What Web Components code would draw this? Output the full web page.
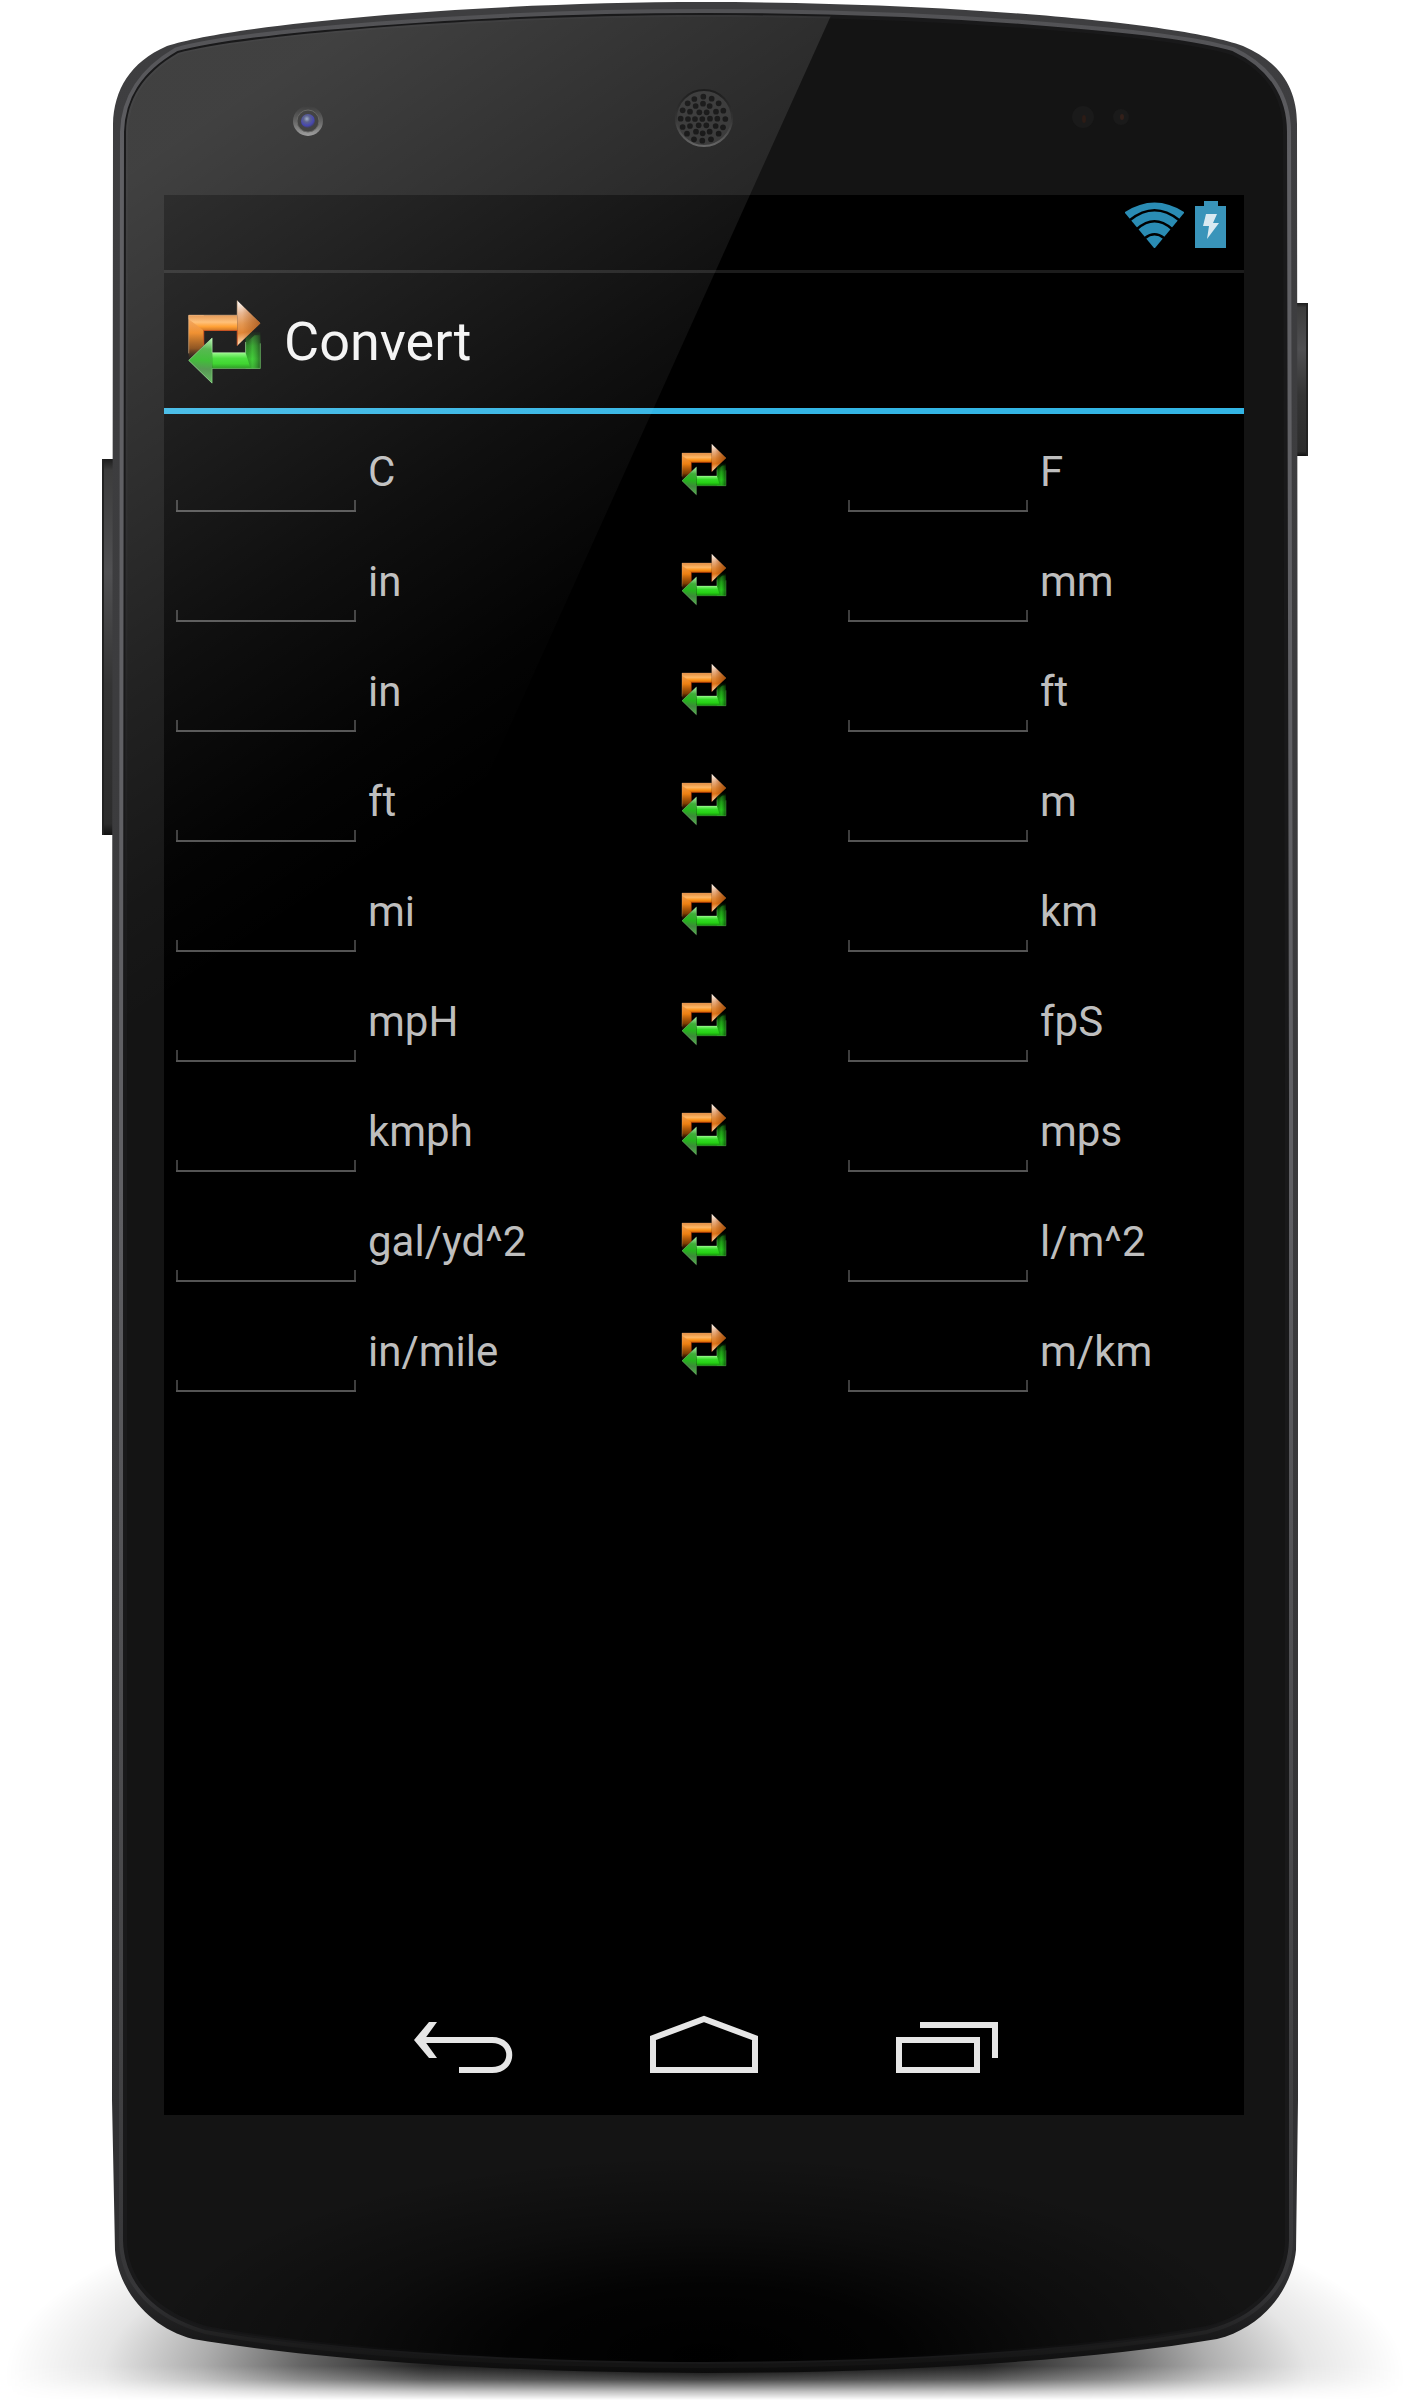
<!DOCTYPE html>
<html lang="en">
<head>
<meta charset="utf-8">
<meta name="viewport" content="width=device-width, initial-scale=1">
<title>Convert</title>
<style>
body { margin: 0; background: #fff; font-family: Roboto, "Noto Sans", sans-serif; }
</style>
</head>
<body>
<phone-frame>
  <status-bar></status-bar>
  <action-bar>Convert</action-bar>
  <convert-list></convert-list>
  <nav-bar></nav-bar>
</phone-frame>
<script>
const define = (name, markup, setup) => {
  const template = document.createElement('template');
  template.innerHTML = markup;
  customElements.define(name, class extends HTMLElement {
    constructor() {
      super();
      this.attachShadow({ mode: 'open' }).append(template.content.cloneNode(true));
    }
    connectedCallback() { if (setup) setup(this, this.shadowRoot); }
  });
};

const GLASS = 'M125 1100 L126 132 C127 100 142 74 178 53 C240 36 470 15 705 15 C940 15 1170 34 1232 53 C1268 70 1285 98 1285 132 L1287 1100 L1287 2240 C1286 2284 1254 2316 1206 2328 C1080 2351 880 2362 705 2362 C530 2362 330 2351 206 2328 C158 2314 126 2284 125 2240 Z';
const BODY = 'M112 1100 L113 124 C114 90 130 62 167 46 C230 25 470 2 705 2 C940 2 1180 22 1243 46 C1280 62 1297 88 1297 124 L1298 1100 L1298 2100 L1296 2250 C1292 2290 1262 2328 1217 2339 C1080 2362 880 2373 705 2373 C530 2373 330 2362 193 2339 C150 2328 118 2290 115 2250 L112 2100 Z';
const HOLES = [[187,177],[178,157],[200,157],[210,176],[199,196],[176,196],[165,177],[189,131],[209,138],[228,155],[232,176],[227,198],[209,215],[188,220],[168,215],[150,198],[144,177],[150,155],[167,138],[190,110],[215,116],[236,130],[250,152],[256,177],[249,202],[236,221],[213,238],[187,242],[162,238],[141,221],[128,201],[122,176],[128,151],[143,130],[163,117]]
  .map(([x, y]) => `<circle cx="${x}" cy="${y}" r="8.6"/>`).join('');

/* Hardware shell, with the app in the screen cell and the glass reflection above it */
define('phone-frame', `
<style>
:host { display: grid; grid-template: 195fr 1920fr 291fr / 164fr 1080fr 166fr; aspect-ratio: 1410 / 2406; overflow: hidden; }
svg { grid-area: 1 / 1 / 4 / 4; width: 100%; height: 100%; display: block; }
.gloss { pointer-events: none; }
.screen { grid-area: 2 / 2; display: flex; flex-direction: column; background: #000; min-width: 0; min-height: 0; }
::slotted(convert-list) { flex: 1; }
</style>
<svg viewBox="0 0 1410 2406" aria-hidden="true">
  <defs>
    <radialGradient id="sh" gradientUnits="userSpaceOnUse" cx="0" cy="0" r="1" gradientTransform="translate(705 2375) scale(700 215)">
      <stop offset="0" stop-opacity="1"/><stop offset=".4" stop-opacity=".86"/><stop offset=".58" stop-opacity=".6"/><stop offset=".72" stop-opacity=".32"/><stop offset=".86" stop-opacity=".1"/><stop offset="1" stop-opacity="0"/>
    </radialGradient>
    <linearGradient id="fade" gradientUnits="userSpaceOnUse" x1="0" y1="2366" x2="0" y2="2400">
      <stop offset="0" stop-color="#fff"/><stop offset=".4" stop-color="#bbb"/><stop offset=".75" stop-color="#444"/><stop offset="1" stop-color="#000"/>
    </linearGradient>
    <mask id="m" maskUnits="userSpaceOnUse" x="0" y="2100" width="1410" height="306"><rect y="2100" width="1410" height="306" fill="url(#fade)"/></mask>
    <linearGradient id="rim" x1="0" y1="0" x2="0" y2="1">
      <stop offset="0" stop-color="#3e3e40"/><stop offset=".6" stop-color="#3a3a3c"/><stop offset=".96" stop-color="#2f2f31"/><stop offset="1" stop-color="#0c0c0c"/>
    </linearGradient>
    <linearGradient id="hi" x1="0" y1="0" x2="0" y2="1">
      <stop offset="0" stop-color="#525255"/><stop offset=".06" stop-color="#606064"/><stop offset=".5" stop-color="#606064"/><stop offset=".85" stop-color="#444446"/><stop offset=".97" stop-color="#363638"/><stop offset="1" stop-color="#141414"/>
    </linearGradient>
    <radialGradient id="low" gradientUnits="userSpaceOnUse" cx="0" cy="0" r="1" gradientTransform="translate(705 2355) scale(560 200)">
      <stop offset="0" stop-color="#000"/><stop offset=".35" stop-color="#000" stop-opacity=".85"/><stop offset=".65" stop-color="#000" stop-opacity=".35"/><stop offset="1" stop-color="#000" stop-opacity="0"/>
    </radialGradient>
    <linearGradient id="side" x1="0" y1="0" x2="0" y2="1">
      <stop offset="0" stop-color="#1c1c1c"/><stop offset=".03" stop-color="#3c3c3c"/><stop offset=".3" stop-color="#505052"/><stop offset=".6" stop-color="#343434"/><stop offset=".97" stop-color="#2c2c2c"/><stop offset="1" stop-color="#111"/>
    </linearGradient>
    <linearGradient id="ring" x1="0" y1="0" x2="0" y2="1">
      <stop offset="0" stop-color="#141414"/><stop offset=".5" stop-color="#444"/><stop offset="1" stop-color="#8c8c8c"/>
    </linearGradient>
    <radialGradient id="lens" cx=".42" cy=".35" r=".65">
      <stop offset="0" stop-color="#8fa0bd"/><stop offset=".35" stop-color="#3c4377"/><stop offset=".75" stop-color="#2020a0"/><stop offset="1" stop-color="#18182c"/>
    </radialGradient>
    <linearGradient id="spk" x1="0" y1="0" x2="0" y2="1">
      <stop offset="0" stop-color="#000"/><stop offset=".5" stop-color="#1c1c1c"/><stop offset="1" stop-color="#555"/>
    </linearGradient>
  </defs>
  <rect y="2160" width="1410" height="246" fill="url(#sh)" mask="url(#m)"/>
  <rect x="102" y="459" width="14" height="376" rx="1" fill="url(#side)"/>
  <rect x="102" y="459" width="2" height="376" fill="#222"/>
  <rect x="1294" y="303" width="14" height="153" rx="1" fill="url(#side)"/>
  <rect x="1306" y="303" width="2" height="153" fill="#222"/>
  <path d="${BODY}" fill="url(#rim)"/>
  <path d="${GLASS}" fill="none" stroke="url(#hi)" stroke-width="12"/>
  <path d="${GLASS}" fill="#141414" stroke="#19191a" stroke-width="4"/>
  <path d="${GLASS}" fill="url(#low)"/>
  <circle cx="308" cy="121" r="15" fill="url(#ring)"/>
  <circle cx="308" cy="121" r="11" fill="#1c1c1c" stroke="#484846" stroke-width="1"/>
  <circle cx="308" cy="121" r="7" fill="url(#lens)"/>
  <circle cx="1083" cy="117" r="11" fill="#1a1a1a"/><ellipse cx="1084" cy="119" rx="2" ry="4" fill="#2c1c16"/>
  <circle cx="1121" cy="117" r="8" fill="#1a1a1a"/><ellipse cx="1122" cy="117" rx="2" ry="3" fill="#33201a"/>
  <circle cx="704" cy="118" r="28" fill="#262626" stroke="url(#spk)" stroke-width="2"/>
  <g transform="translate(640 60) scale(.3333)" fill="#000">${HOLES}</g>
</svg>
<div class="screen"><slot></slot></div>
<svg class="gloss" viewBox="0 0 1410 2406" aria-hidden="true">
  <defs>
    <linearGradient id="g" gradientUnits="userSpaceOnUse" x1="164" y1="150" x2="560" y2="744">
      <stop offset="0" stop-color="#fff" stop-opacity=".19"/><stop offset=".3" stop-color="#fff" stop-opacity=".125"/><stop offset=".6" stop-color="#fff" stop-opacity=".06"/><stop offset=".85" stop-color="#fff" stop-opacity=".015"/><stop offset="1" stop-color="#fff" stop-opacity="0"/>
    </linearGradient>
    <clipPath id="c"><path d="${GLASS}"/></clipPath>
  </defs>
  <path d="M100 0 H838 L380 1014 H100 Z" fill="url(#g)" clip-path="url(#c)"/>
</svg>`);

/* Two chasing arrows */
define('swap-icon', `
<style>
:host { display: block; flex: none; width: 46px; height: 53px; }
svg { display: block; width: 100%; height: 100%; }
</style>
<svg viewBox="50 58 224 256" aria-hidden="true">
  <defs>
    <linearGradient id="o" x1="0" y1="106" x2="0" y2="152" gradientUnits="userSpaceOnUse">
      <stop offset="0" stop-color="#e08a3e"/><stop offset=".45" stop-color="#ffb765"/><stop offset=".75" stop-color="#ff9113"/><stop offset="1" stop-color="#c65f08"/>
    </linearGradient>
    <linearGradient id="ol" x1="0" y1="106" x2="0" y2="238" gradientUnits="userSpaceOnUse">
      <stop offset="0" stop-color="#f3a258"/><stop offset=".4" stop-color="#ee8012"/><stop offset=".75" stop-color="#a04c02" stop-opacity=".8"/><stop offset="1" stop-color="#5a2800" stop-opacity="0"/>
    </linearGradient>
    <linearGradient id="oh" x1="200" y1="62" x2="222" y2="190" gradientUnits="userSpaceOnUse">
      <stop offset="0" stop-color="#fff"/><stop offset=".3" stop-color="#e6ad83"/><stop offset=".55" stop-color="#e08838"/><stop offset=".75" stop-color="#dd7418"/><stop offset="1" stop-color="#ffd2a4"/>
    </linearGradient>
    <linearGradient id="or" x1="215" y1="0" x2="269" y2="0" gradientUnits="userSpaceOnUse">
      <stop offset="0" stop-color="#a04806" stop-opacity="0"/><stop offset="1" stop-color="#a04806" stop-opacity=".9"/>
    </linearGradient>
    <linearGradient id="n" x1="0" y1="218" x2="0" y2="265" gradientUnits="userSpaceOnUse">
      <stop offset="0" stop-color="#8af87c"/><stop offset=".35" stop-color="#33dc26"/><stop offset=".7" stop-color="#25d014"/><stop offset="1" stop-color="#138c0b"/>
    </linearGradient>
    <linearGradient id="nr" x1="0" y1="152" x2="0" y2="265" gradientUnits="userSpaceOnUse">
      <stop offset="0" stop-color="#0a5a06" stop-opacity="0"/><stop offset=".4" stop-color="#14900c" stop-opacity=".85"/><stop offset=".75" stop-color="#1cba12"/><stop offset="1" stop-color="#128a0b"/>
    </linearGradient>
    <linearGradient id="nd" x1="225" y1="0" x2="269" y2="0" gradientUnits="userSpaceOnUse">
      <stop offset="0" stop-color="#002800" stop-opacity=".1"/><stop offset=".45" stop-color="#40e434" stop-opacity=".35"/><stop offset="1" stop-color="#002000" stop-opacity=".6"/>
    </linearGradient>
    <linearGradient id="nh" x1="122" y1="174" x2="110" y2="309" gradientUnits="userSpaceOnUse">
      <stop offset="0" stop-color="#b5f5b0"/><stop offset=".25" stop-color="#3fae38"/><stop offset=".5" stop-color="#25b51c"/><stop offset=".7" stop-color="#3e8a3b"/><stop offset="1" stop-color="#55b050"/>
    </linearGradient>
  </defs>
  <path d="M55 106 H100 V196 L60 238 H55 Z" fill="url(#ol)"/>
  <path d="M55 106 H200 V152 H100 L55 118 Z" fill="url(#o)"/>
  <path d="M200 62 L269 130 L200 197 Z" fill="url(#oh)"/>
  <path d="M200 62 L269 130 L200 197 Z" fill="url(#or)"/>
  <path d="M55 220 V106 H200 V62" fill="none" stroke="#ffc58c" stroke-width="2.5" stroke-opacity=".6"/>
  <path d="M100 196 V152 H200 V197" fill="none" stroke="#d43c00" stroke-width="3" stroke-opacity=".8"/>
  <path d="M225 174 L244 156 H269 V265 H225 Z" fill="url(#nr)"/>
  <path d="M225 190 L252 166 H269 V265 H225 Z" fill="url(#nd)"/>
  <path d="M125 218 H225 L240 265 H125 Z" fill="url(#n)"/>
  <path d="M125 309 L55 241 L125 174 Z" fill="url(#nh)"/>
  <path d="M125 309 L55 241 L125 174 V218 H225 V186" fill="none" stroke="#b8ffb0" stroke-width="2.5" stroke-opacity=".65"/>
  <path d="M125 309 V265 H269 V190" fill="none" stroke="#8ef486" stroke-width="2.5" stroke-opacity=".55"/>
</svg>`);

define('status-bar', `
<style>
:host { display: flex; justify-content: flex-end; align-items: flex-start; gap: 11px; box-sizing: border-box; height: 78px; padding: 6px 18px 0; border-bottom: 3px solid #1c1c1c; }
svg { display: block; }
</style>
<svg width="59" height="47" viewBox="0 0 59 47" role="img" aria-label="Wi-Fi">
  <path d="M0 11 Q29.500 -8 59 11 V12 L30 47 H29 L0 12 Z" fill="#2a8cb4"/>
  <path d="M5 19 Q29.500 -.5 54 19 M12 28 Q29.500 12.500 47 28 M20 37 Q29.500 29.500 39 37" fill="none" stroke="#000" stroke-width="2.600"/>
</svg>
<svg width="31" height="47" viewBox="0 0 31 47" role="img" aria-label="Battery charging">
  <path d="M9 0 H23 V5 H31 V47 H0 V5 H9 Z" fill="#3994ba"/>
  <path d="M11 13 H22 L18 22 H24 L12 38 L14 25 H8 Z" fill="#d9e9f1"/>
</svg>`);

define('action-bar', `
<style>
:host { display: block; }
header { display: flex; align-items: center; gap: 22px; box-sizing: border-box; height: 141px; padding: 2px 23px 0; border-bottom: 6px solid #33b5e5; }
swap-icon { width: 75px; height: 86px; }
h1 { margin: 0; font-size: 54px; line-height: 64px; font-weight: 400; color: #f3f3f3; }
</style>
<header><swap-icon></swap-icon><h1><slot></slot></h1></header>`);

define('unit-field', `
<style>
:host { display: flex; align-items: center; height: 110px; min-width: 0; }
input {
  flex: none; box-sizing: border-box; width: 180px; height: 86px; margin: 0 12px; padding: 0 12px; border: 0; border-radius: 0; outline: 0;
  font: 400 42px/50px Roboto, "Noto Sans", sans-serif; color: #fff;
  background:
    linear-gradient(#545454, #545454) 0 100% / 100% 2px no-repeat,
    linear-gradient(#3e3e3e, #3e3e3e) 0 100% / 2px 12px no-repeat,
    linear-gradient(#3e3e3e, #3e3e3e) 100% 100% / 2px 12px no-repeat;
}
label { padding-top: 6px; font-size: 42px; line-height: 50px; color: #bebebe; white-space: nowrap; }
</style>
<input id="value" type="text" inputmode="decimal"><label for="value"></label>`,
(host, root) => { root.querySelector('label').textContent = host.getAttribute('unit'); });

define('convert-row', `
<style>
:host { display: grid; grid-template-columns: 17fr 11fr 17fr; align-items: center; }
button { justify-self: center; padding: 0; border: 0; background: none; cursor: pointer; }
</style>
<unit-field class="from"></unit-field>
<button type="button" aria-label="Convert"><swap-icon></swap-icon></button>
<unit-field class="to"></unit-field>`,
(host, root) => {
  for (const side of ['from', 'to']) {
    const field = root.querySelector('.' + side);
    field.setAttribute('unit', host.getAttribute(side));
    field.connectedCallback();
  }
});

define('convert-list', `
<style>:host { display: block; }</style>
<convert-row from="C" to="F"></convert-row>
<convert-row from="in" to="mm"></convert-row>
<convert-row from="in" to="ft"></convert-row>
<convert-row from="ft" to="m"></convert-row>
<convert-row from="mi" to="km"></convert-row>
<convert-row from="mpH" to="fpS"></convert-row>
<convert-row from="kmph" to="mps"></convert-row>
<convert-row from="gal/yd^2" to="l/m^2"></convert-row>
<convert-row from="in/mile" to="m/km"></convert-row>`);

/* Rows connect before their fields do, so the labels are filled again once the tree is built */
document.querySelectorAll('convert-list').forEach(list =>
  list.shadowRoot.querySelectorAll('convert-row').forEach(row =>
    row.shadowRoot.querySelectorAll('unit-field').forEach(field => field.connectedCallback())));

define('nav-bar', `
<style>
:host { display: block; }
nav { display: flex; justify-content: center; height: 144px; }
button { flex: 0 1 240px; padding: 0; border: 0; background: none; cursor: pointer; }
svg { display: block; width: 100%; height: 144px; fill: none; stroke: #e6e6e6; stroke-width: 6; }
.tip { fill: #e6e6e6; stroke: none; }
</style>
<nav>
  <button type="button" aria-label="Back"><svg viewBox="0 0 240 144"><path d="M78 69 H148 C171 69 171 99 148 99 H115"/><path class="tip" d="M85 51 H93 L80 69 L93 87 H85 L70 69 Z"/></svg></button>
  <button type="button" aria-label="Home"><svg viewBox="0 0 240 144"><path d="M69 99 V67 L120 48 L171 67 V99 Z"/></svg></button>
  <button type="button" aria-label="Recent apps"><svg viewBox="0 0 240 144"><path d="M75 69 H153 V99 H75 Z M96 54 H171 V87"/></svg></button>
</nav>`);
</script>
</body>
</html>
